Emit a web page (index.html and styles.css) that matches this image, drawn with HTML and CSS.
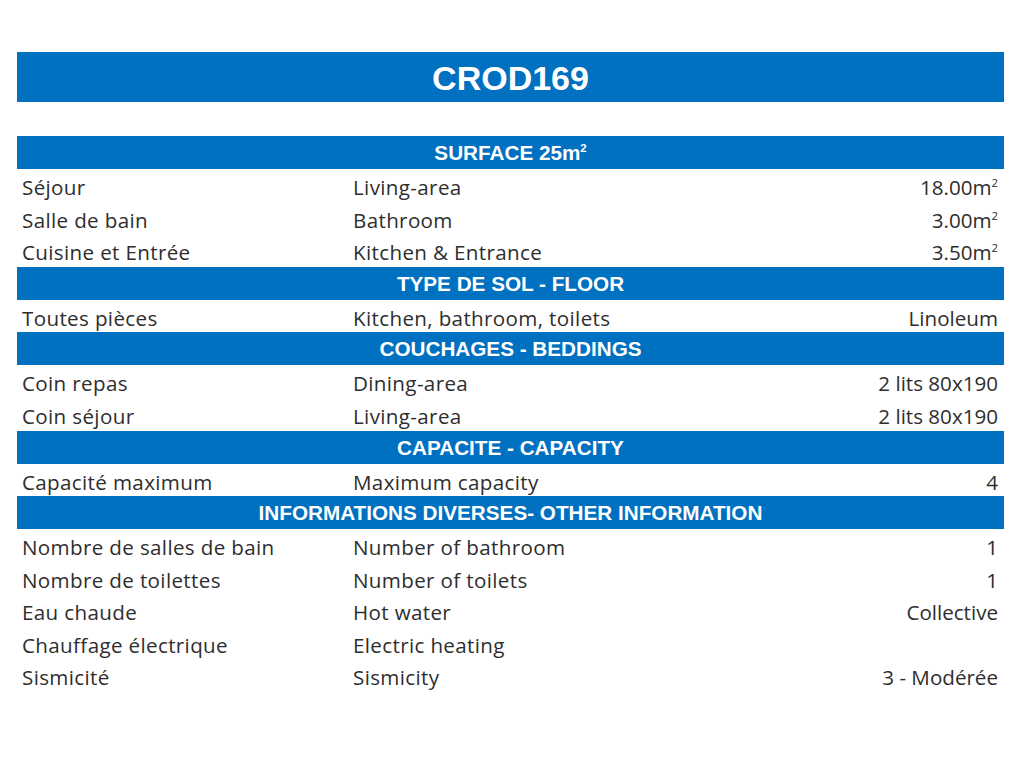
FILE: index.html
```html
<!DOCTYPE html>
<html lang="fr">
<head>
<meta charset="utf-8">
<title>CROD169</title>
<link rel="stylesheet" href="styles.css">
</head>
<body>
<div class="page">
  <div class="title">CROD169</div>
  <div class="sheet">
    <div class="band"><span>SURFACE 25m<sup>2</sup></span></div>
    <div class="row"><span>Séjour</span><span>Living-area</span><span class="val">18.00m<sup>2</sup></span></div>
    <div class="row"><span>Salle de bain</span><span>Bathroom</span><span class="val">3.00m<sup>2</sup></span></div>
    <div class="row"><span>Cuisine et Entrée</span><span>Kitchen &amp; Entrance</span><span class="val">3.50m<sup>2</sup></span></div>
    <div class="band"><span>TYPE DE SOL - FLOOR</span></div>
    <div class="row"><span>Toutes pièces</span><span>Kitchen, bathroom, toilets</span><span class="val">Linoleum</span></div>
    <div class="band"><span>COUCHAGES - BEDDINGS</span></div>
    <div class="row"><span>Coin repas</span><span>Dining-area</span><span class="val">2 lits 80x190</span></div>
    <div class="row"><span>Coin séjour</span><span>Living-area</span><span class="val">2 lits 80x190</span></div>
    <div class="band"><span>CAPACITE - CAPACITY</span></div>
    <div class="row"><span>Capacité maximum</span><span>Maximum capacity</span><span class="val">4</span></div>
    <div class="band"><span>INFORMATIONS DIVERSES- OTHER INFORMATION</span></div>
    <div class="row"><span>Nombre de salles de bain</span><span>Number of bathroom</span><span class="val">1</span></div>
    <div class="row"><span>Nombre de toilettes</span><span>Number of toilets</span><span class="val">1</span></div>
    <div class="row"><span>Eau chaude</span><span>Hot water</span><span class="val">Collective</span></div>
    <div class="row"><span>Chauffage électrique</span><span>Electric heating</span><span class="val"></span></div>
    <div class="row"><span>Sismicité</span><span>Sismicity</span><span class="val">3 - Modérée</span></div>
  </div>
</div>
</body>
</html>
```

FILE: styles.css
```css
html, body {
  margin: 0;
  padding: 0;
  background: #ffffff;
}
.page {
  width: 987px;
  margin-left: 17px;
  padding-top: 52px;
}
.title {
  height: 50px;
  background: #0070c0;
  color: #ffffff;
  font-family: "Liberation Sans", Arial, sans-serif;
  font-weight: bold;
  font-size: 34px;
  display: flex;
  align-items: center;
  justify-content: center;
  box-sizing: border-box;
  padding-top: 2px;
}
.sheet {
  margin-top: 34px;
  display: flex;
  flex-direction: column;
}
.band {
  height: 33px;
  background: #0070c0;
  color: #ffffff;
  font-family: "Liberation Sans", Arial, sans-serif;
  font-weight: bold;
  font-size: 20.7px;
  display: flex;
  align-items: center;
  justify-content: center;
  box-sizing: border-box;
  padding-top: 2px;
}
.band span {
  line-height: 1.2;
}
sup {
  font-size: 0.55em;
  line-height: 1;
  vertical-align: super;
}
.row {
  height: 32.6px;
  display: grid;
  grid-template-columns: 331px 1fr auto;
  align-items: center;
  font-family: "Open Sans", "Noto Sans", sans-serif;
  font-size: 20.6px;
  letter-spacing: 0.35px;
  color: #2e2e2e;
  box-sizing: border-box;
  padding-top: 4px;
}
.row span {
  padding-left: 5px;
  white-space: nowrap;
  line-height: 1.2;
}
.row .val {
  padding-left: 0;
  padding-right: 6px;
  text-align: right;
  letter-spacing: 0;
}
```
